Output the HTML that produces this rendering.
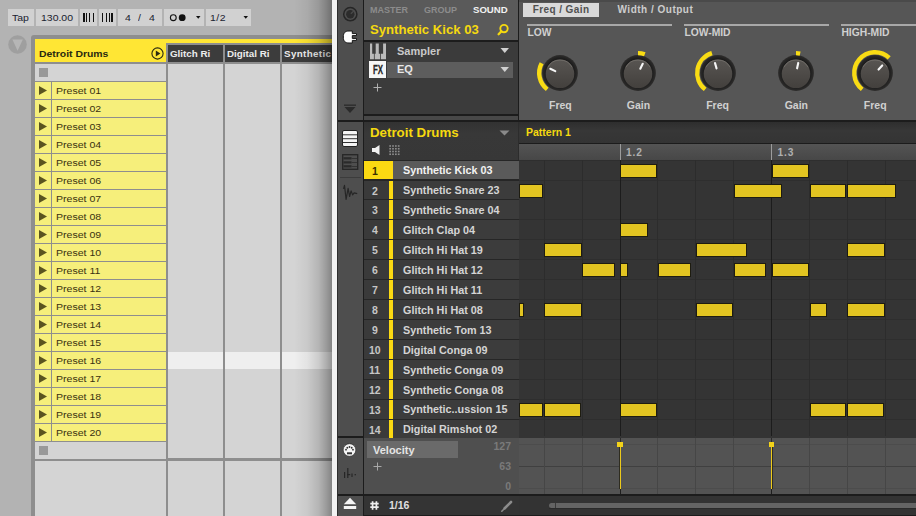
<!DOCTYPE html><html><head><meta charset="utf-8"><style>
html,body{margin:0;padding:0;width:916px;height:516px;overflow:hidden;background:#b3b3b3;}
body{position:relative;font-family:"Liberation Sans",sans-serif;}
div{position:absolute;box-sizing:border-box;}
.t{white-space:nowrap;}
svg{position:absolute;}
</style></head><body>
<div style="left:0px;top:0px;width:332px;height:516px;background:#b3b3b3;"></div>
<div style="left:8px;top:9px;width:26px;height:17px;background:#d1d1d1;"></div>
<div style="left:36px;top:9px;width:42px;height:17px;background:#d1d1d1;"></div>
<div style="left:80px;top:9px;width:17px;height:17px;background:#d1d1d1;"></div>
<div style="left:99px;top:9px;width:17px;height:17px;background:#d1d1d1;"></div>
<div style="left:118px;top:9px;width:44px;height:17px;background:#d1d1d1;"></div>
<div style="left:164px;top:9px;width:40px;height:17px;background:#d1d1d1;"></div>
<div style="left:206px;top:9px;width:45px;height:17px;background:#d1d1d1;"></div>
<div class="t" style="left:12px;top:12.9px;font-size:9.7px;line-height:9.7px;color:#1a2230;font-weight:normal;transform:scaleX(1.08);transform-origin:left;">Tap</div>
<div class="t" style="left:40.8px;top:12.9px;font-size:9.7px;line-height:9.7px;color:#1a2230;font-weight:normal;transform:scaleX(1.08);transform-origin:left;">130.00</div>
<div style="left:83px;top:13px;width:2px;height:9px;background:#111;"></div>
<div style="left:86px;top:13px;width:1.2px;height:9px;background:#111;"></div>
<div style="left:88.8px;top:13px;width:1.3px;height:9px;background:#111;"></div>
<div style="left:92.9px;top:13px;width:1.2px;height:9px;background:#111;"></div>
<div style="left:101.9px;top:13px;width:1.2px;height:9px;background:#111;"></div>
<div style="left:105.8px;top:13px;width:1.2px;height:9px;background:#111;"></div>
<div style="left:108.9px;top:13px;width:1.2px;height:9px;background:#111;"></div>
<div style="left:111.1px;top:13px;width:2.1px;height:9px;background:#111;"></div>
<div class="t" style="left:125px;top:12.9px;font-size:9.7px;line-height:9.7px;color:#1a2230;font-weight:normal;transform:scaleX(1.08);transform-origin:left;">4</div>
<div class="t" style="left:138.2px;top:12.9px;font-size:9.7px;line-height:9.7px;color:#1a2230;font-weight:normal;transform:scaleX(1.08);transform-origin:left;">/</div>
<div class="t" style="left:149px;top:12.9px;font-size:9.7px;line-height:9.7px;color:#1a2230;font-weight:normal;transform:scaleX(1.08);transform-origin:left;">4</div>
<svg style="left:164px;top:9px" width="40" height="17"><circle cx="9.3" cy="8.7" r="2.9" fill="none" stroke="#111" stroke-width="1.1"/><circle cx="18.2" cy="8.7" r="3.4" fill="#111"/><path d="M32 7 L36.5 7 L34.25 9.7 Z" fill="#111"/></svg>
<div class="t" style="left:210.3px;top:12.9px;font-size:9.7px;line-height:9.7px;color:#1a2230;font-weight:normal;letter-spacing:0.5px;transform:scaleX(1.08);transform-origin:left;">1/2</div>
<svg style="left:206px;top:9px" width="45" height="17"><path d="M37.5 7 L42 7 L39.75 9.7 Z" fill="#111"/></svg>
<svg style="left:7px;top:34px" width="21" height="21"><circle cx="10.5" cy="10.5" r="9.3" fill="#9f9f9f"/><path d="M5.4 5.6 L15.8 5.6 L10.6 16.8 Z" fill="#b6b6b6"/></svg>
<div style="left:31px;top:35px;width:320px;height:500px;background:#8e8e8e;border-radius:3px 0 0 0"></div>
<div style="left:35px;top:39px;width:300px;height:4px;background:#ffe634;"></div>
<div style="left:35px;top:39px;width:131px;height:23px;background:#ffe634;"></div>
<div style="left:168px;top:45px;width:55px;height:17px;background:#3c3c3c;"></div>
<div class="t" style="left:170px;top:48.7px;font-size:9.8px;line-height:9.8px;color:#ececec;font-weight:bold;">Glitch Ri</div>
<div style="left:225px;top:45px;width:55px;height:17px;background:#3c3c3c;"></div>
<div class="t" style="left:227px;top:48.7px;font-size:9.8px;line-height:9.8px;color:#ececec;font-weight:bold;">Digital Ri</div>
<div style="left:282px;top:45px;width:58px;height:17px;background:#3c3c3c;"></div>
<div class="t" style="left:284px;top:48.7px;font-size:9.8px;line-height:9.8px;color:#ececec;font-weight:bold;letter-spacing:0.35px">Synthetic</div>
<div class="t" style="left:38.5px;top:48.8px;font-size:9.6px;line-height:9.6px;color:#2a2a10;font-weight:bold;transform:scaleX(1.085);transform-origin:left;">Detroit Drums</div>
<svg style="left:150px;top:46px" width="15" height="15"><circle cx="7.5" cy="7.5" r="5.6" fill="none" stroke="#2a2a10" stroke-width="1.1"/><path d="M5.8 4.6 L10.4 7.5 L5.8 10.4 Z" fill="#2a2a10"/></svg>
<div style="left:35px;top:64px;width:131px;height:17px;background:#d4d4d4;"></div>
<div style="left:39px;top:68px;width:9px;height:9px;background:#999999;"></div>
<div style="left:35px;top:82px;width:16px;height:17px;background:#f6ef7b;"></div>
<div style="left:52px;top:82px;width:114px;height:17px;background:#f6ef7b;"></div>
<svg style="left:38px;top:86px" width="10" height="10"><path d="M1 0 L9 4.5 L1 9 Z" fill="#5a5420"/></svg>
<div class="t" style="left:55.5px;top:85.6px;font-size:9.6px;line-height:9.6px;color:#3a3210;font-weight:normal;transform:scaleX(1.1);transform-origin:left;">Preset 01</div>
<div style="left:35px;top:100px;width:16px;height:17px;background:#f6ef7b;"></div>
<div style="left:52px;top:100px;width:114px;height:17px;background:#f6ef7b;"></div>
<svg style="left:38px;top:104px" width="10" height="10"><path d="M1 0 L9 4.5 L1 9 Z" fill="#5a5420"/></svg>
<div class="t" style="left:55.5px;top:103.6px;font-size:9.6px;line-height:9.6px;color:#3a3210;font-weight:normal;transform:scaleX(1.1);transform-origin:left;">Preset 02</div>
<div style="left:35px;top:118px;width:16px;height:17px;background:#f6ef7b;"></div>
<div style="left:52px;top:118px;width:114px;height:17px;background:#f6ef7b;"></div>
<svg style="left:38px;top:122px" width="10" height="10"><path d="M1 0 L9 4.5 L1 9 Z" fill="#5a5420"/></svg>
<div class="t" style="left:55.5px;top:121.6px;font-size:9.6px;line-height:9.6px;color:#3a3210;font-weight:normal;transform:scaleX(1.1);transform-origin:left;">Preset 03</div>
<div style="left:35px;top:136px;width:16px;height:17px;background:#f6ef7b;"></div>
<div style="left:52px;top:136px;width:114px;height:17px;background:#f6ef7b;"></div>
<svg style="left:38px;top:140px" width="10" height="10"><path d="M1 0 L9 4.5 L1 9 Z" fill="#5a5420"/></svg>
<div class="t" style="left:55.5px;top:139.6px;font-size:9.6px;line-height:9.6px;color:#3a3210;font-weight:normal;transform:scaleX(1.1);transform-origin:left;">Preset 04</div>
<div style="left:35px;top:154px;width:16px;height:17px;background:#f6ef7b;"></div>
<div style="left:52px;top:154px;width:114px;height:17px;background:#f6ef7b;"></div>
<svg style="left:38px;top:158px" width="10" height="10"><path d="M1 0 L9 4.5 L1 9 Z" fill="#5a5420"/></svg>
<div class="t" style="left:55.5px;top:157.6px;font-size:9.6px;line-height:9.6px;color:#3a3210;font-weight:normal;transform:scaleX(1.1);transform-origin:left;">Preset 05</div>
<div style="left:35px;top:172px;width:16px;height:17px;background:#f6ef7b;"></div>
<div style="left:52px;top:172px;width:114px;height:17px;background:#f6ef7b;"></div>
<svg style="left:38px;top:176px" width="10" height="10"><path d="M1 0 L9 4.5 L1 9 Z" fill="#5a5420"/></svg>
<div class="t" style="left:55.5px;top:175.6px;font-size:9.6px;line-height:9.6px;color:#3a3210;font-weight:normal;transform:scaleX(1.1);transform-origin:left;">Preset 06</div>
<div style="left:35px;top:190px;width:16px;height:17px;background:#f6ef7b;"></div>
<div style="left:52px;top:190px;width:114px;height:17px;background:#f6ef7b;"></div>
<svg style="left:38px;top:194px" width="10" height="10"><path d="M1 0 L9 4.5 L1 9 Z" fill="#5a5420"/></svg>
<div class="t" style="left:55.5px;top:193.6px;font-size:9.6px;line-height:9.6px;color:#3a3210;font-weight:normal;transform:scaleX(1.1);transform-origin:left;">Preset 07</div>
<div style="left:35px;top:208px;width:16px;height:17px;background:#f6ef7b;"></div>
<div style="left:52px;top:208px;width:114px;height:17px;background:#f6ef7b;"></div>
<svg style="left:38px;top:212px" width="10" height="10"><path d="M1 0 L9 4.5 L1 9 Z" fill="#5a5420"/></svg>
<div class="t" style="left:55.5px;top:211.6px;font-size:9.6px;line-height:9.6px;color:#3a3210;font-weight:normal;transform:scaleX(1.1);transform-origin:left;">Preset 08</div>
<div style="left:35px;top:226px;width:16px;height:17px;background:#f6ef7b;"></div>
<div style="left:52px;top:226px;width:114px;height:17px;background:#f6ef7b;"></div>
<svg style="left:38px;top:230px" width="10" height="10"><path d="M1 0 L9 4.5 L1 9 Z" fill="#5a5420"/></svg>
<div class="t" style="left:55.5px;top:229.6px;font-size:9.6px;line-height:9.6px;color:#3a3210;font-weight:normal;transform:scaleX(1.1);transform-origin:left;">Preset 09</div>
<div style="left:35px;top:244px;width:16px;height:17px;background:#f6ef7b;"></div>
<div style="left:52px;top:244px;width:114px;height:17px;background:#f6ef7b;"></div>
<svg style="left:38px;top:248px" width="10" height="10"><path d="M1 0 L9 4.5 L1 9 Z" fill="#5a5420"/></svg>
<div class="t" style="left:55.5px;top:247.6px;font-size:9.6px;line-height:9.6px;color:#3a3210;font-weight:normal;transform:scaleX(1.1);transform-origin:left;">Preset 10</div>
<div style="left:35px;top:262px;width:16px;height:17px;background:#f6ef7b;"></div>
<div style="left:52px;top:262px;width:114px;height:17px;background:#f6ef7b;"></div>
<svg style="left:38px;top:266px" width="10" height="10"><path d="M1 0 L9 4.5 L1 9 Z" fill="#5a5420"/></svg>
<div class="t" style="left:55.5px;top:265.6px;font-size:9.6px;line-height:9.6px;color:#3a3210;font-weight:normal;transform:scaleX(1.1);transform-origin:left;">Preset 11</div>
<div style="left:35px;top:280px;width:16px;height:17px;background:#f6ef7b;"></div>
<div style="left:52px;top:280px;width:114px;height:17px;background:#f6ef7b;"></div>
<svg style="left:38px;top:284px" width="10" height="10"><path d="M1 0 L9 4.5 L1 9 Z" fill="#5a5420"/></svg>
<div class="t" style="left:55.5px;top:283.6px;font-size:9.6px;line-height:9.6px;color:#3a3210;font-weight:normal;transform:scaleX(1.1);transform-origin:left;">Preset 12</div>
<div style="left:35px;top:298px;width:16px;height:17px;background:#f6ef7b;"></div>
<div style="left:52px;top:298px;width:114px;height:17px;background:#f6ef7b;"></div>
<svg style="left:38px;top:302px" width="10" height="10"><path d="M1 0 L9 4.5 L1 9 Z" fill="#5a5420"/></svg>
<div class="t" style="left:55.5px;top:301.6px;font-size:9.6px;line-height:9.6px;color:#3a3210;font-weight:normal;transform:scaleX(1.1);transform-origin:left;">Preset 13</div>
<div style="left:35px;top:316px;width:16px;height:17px;background:#f6ef7b;"></div>
<div style="left:52px;top:316px;width:114px;height:17px;background:#f6ef7b;"></div>
<svg style="left:38px;top:320px" width="10" height="10"><path d="M1 0 L9 4.5 L1 9 Z" fill="#5a5420"/></svg>
<div class="t" style="left:55.5px;top:319.6px;font-size:9.6px;line-height:9.6px;color:#3a3210;font-weight:normal;transform:scaleX(1.1);transform-origin:left;">Preset 14</div>
<div style="left:35px;top:334px;width:16px;height:17px;background:#f6ef7b;"></div>
<div style="left:52px;top:334px;width:114px;height:17px;background:#f6ef7b;"></div>
<svg style="left:38px;top:338px" width="10" height="10"><path d="M1 0 L9 4.5 L1 9 Z" fill="#5a5420"/></svg>
<div class="t" style="left:55.5px;top:337.6px;font-size:9.6px;line-height:9.6px;color:#3a3210;font-weight:normal;transform:scaleX(1.1);transform-origin:left;">Preset 15</div>
<div style="left:35px;top:352px;width:16px;height:17px;background:#f6ef7b;"></div>
<div style="left:52px;top:352px;width:114px;height:17px;background:#f6ef7b;"></div>
<svg style="left:38px;top:356px" width="10" height="10"><path d="M1 0 L9 4.5 L1 9 Z" fill="#5a5420"/></svg>
<div class="t" style="left:55.5px;top:355.6px;font-size:9.6px;line-height:9.6px;color:#3a3210;font-weight:normal;transform:scaleX(1.1);transform-origin:left;">Preset 16</div>
<div style="left:35px;top:370px;width:16px;height:17px;background:#f6ef7b;"></div>
<div style="left:52px;top:370px;width:114px;height:17px;background:#f6ef7b;"></div>
<svg style="left:38px;top:374px" width="10" height="10"><path d="M1 0 L9 4.5 L1 9 Z" fill="#5a5420"/></svg>
<div class="t" style="left:55.5px;top:373.6px;font-size:9.6px;line-height:9.6px;color:#3a3210;font-weight:normal;transform:scaleX(1.1);transform-origin:left;">Preset 17</div>
<div style="left:35px;top:388px;width:16px;height:17px;background:#f6ef7b;"></div>
<div style="left:52px;top:388px;width:114px;height:17px;background:#f6ef7b;"></div>
<svg style="left:38px;top:392px" width="10" height="10"><path d="M1 0 L9 4.5 L1 9 Z" fill="#5a5420"/></svg>
<div class="t" style="left:55.5px;top:391.6px;font-size:9.6px;line-height:9.6px;color:#3a3210;font-weight:normal;transform:scaleX(1.1);transform-origin:left;">Preset 18</div>
<div style="left:35px;top:406px;width:16px;height:17px;background:#f6ef7b;"></div>
<div style="left:52px;top:406px;width:114px;height:17px;background:#f6ef7b;"></div>
<svg style="left:38px;top:410px" width="10" height="10"><path d="M1 0 L9 4.5 L1 9 Z" fill="#5a5420"/></svg>
<div class="t" style="left:55.5px;top:409.6px;font-size:9.6px;line-height:9.6px;color:#3a3210;font-weight:normal;transform:scaleX(1.1);transform-origin:left;">Preset 19</div>
<div style="left:35px;top:424px;width:16px;height:17px;background:#f6ef7b;"></div>
<div style="left:52px;top:424px;width:114px;height:17px;background:#f6ef7b;"></div>
<svg style="left:38px;top:428px" width="10" height="10"><path d="M1 0 L9 4.5 L1 9 Z" fill="#5a5420"/></svg>
<div class="t" style="left:55.5px;top:427.6px;font-size:9.6px;line-height:9.6px;color:#3a3210;font-weight:normal;transform:scaleX(1.1);transform-origin:left;">Preset 20</div>
<div style="left:35px;top:442px;width:131px;height:16.6px;background:#d4d4d4;"></div>
<div style="left:39px;top:446px;width:9px;height:9px;background:#999999;"></div>
<div style="left:35px;top:461px;width:131px;height:60px;background:#d4d4d4;"></div>
<div style="left:168px;top:64px;width:55px;height:394px;background:#d4d4d4;"></div>
<div style="left:168px;top:352px;width:55px;height:17px;background:#efefef;"></div>
<div style="left:168px;top:461px;width:55px;height:60px;background:#d4d4d4;"></div>
<div style="left:225px;top:64px;width:55px;height:394px;background:#d4d4d4;"></div>
<div style="left:225px;top:352px;width:55px;height:17px;background:#efefef;"></div>
<div style="left:225px;top:461px;width:55px;height:60px;background:#d4d4d4;"></div>
<div style="left:282px;top:64px;width:58px;height:394px;background:#d4d4d4;"></div>
<div style="left:282px;top:352px;width:58px;height:17px;background:#efefef;"></div>
<div style="left:282px;top:461px;width:58px;height:60px;background:#d4d4d4;"></div>
<div style="left:294px;top:0;width:38px;height:516px;background:linear-gradient(to right,rgba(0,0,0,0),rgba(0,0,0,0.05) 35%,rgba(0,0,0,0.15) 65%,rgba(0,0,0,0.27) 85%,rgba(0,0,0,0.38));"></div>
<div style="left:332px;top:0px;width:5px;height:516px;background:#f2f2f2;"></div>
<div style="left:337px;top:0px;width:579px;height:516px;background:#1c1c1c;"></div>
<div style="left:338px;top:0px;width:25px;height:120px;background:#4e4e4e;"></div>
<div style="left:338px;top:122px;width:25px;height:314px;background:#4e4e4e;"></div>
<div style="left:338px;top:438px;width:25px;height:56px;background:#4e4e4e;"></div>
<div style="left:338px;top:496px;width:25px;height:20px;background:#4e4e4e;"></div>
<div style="left:337px;top:0px;width:1px;height:516px;background:#2e2e2e;"></div>
<div style="left:364px;top:0px;width:154px;height:40px;background:#5a5a5a;"></div>
<div class="t" style="left:370px;top:6px;font-size:9px;line-height:9px;color:#8c8c8c;font-weight:bold;">MASTER</div>
<div class="t" style="left:424px;top:6px;font-size:9px;line-height:9px;color:#8c8c8c;font-weight:bold;">GROUP</div>
<div class="t" style="left:473px;top:5.2px;font-size:9.6px;line-height:9.6px;color:#f2f2f2;font-weight:bold;">SOUND</div>
<div class="t" style="left:370px;top:23px;font-size:13.15px;line-height:13.15px;color:#f5d90f;font-weight:bold;">Synthetic Kick 03</div>
<svg style="left:494px;top:22px" width="16" height="16"><circle cx="10" cy="6.6" r="3.7" fill="none" stroke="#f5d90f" stroke-width="1.9"/><path d="M7.4 9.3 L4.6 12.2" stroke="#f5d90f" stroke-width="2.3" stroke-linecap="round"/></svg>
<div style="left:364px;top:42px;width:154px;height:72px;background:#3b3b3b;"></div>
<div style="left:364px;top:116px;width:154px;height:4px;background:#484848;"></div>
<svg style="left:370px;top:43px" width="17" height="17"><path d="M0 0.5 H2.2 V10.8 H3.9 V16.2 H0 Z M5.7 0.5 H8.8 V10.8 H10.1 V16.2 H4.7 V10.8 H5.7 Z M13.1 0.5 H16 V16.2 H10.9 V10.8 H13.1 Z" fill="#bababa"/></svg>
<div style="left:369px;top:61px;width:17.2px;height:17px;background:#f6f6f6;"></div>
<div class="t" style="left:372.8px;top:63.9px;font-size:12.3px;line-height:12.3px;color:#262626;font-weight:bold;transform:scaleX(0.64);transform-origin:left;-webkit-text-stroke:0.3px #262626">FX</div>
<div class="t" style="left:397px;top:46px;font-size:11px;line-height:11px;color:#c9c9c9;font-weight:bold;">Sampler</div>
<div style="left:387px;top:62px;width:126px;height:16px;background:#5d5d5d;"></div>
<div class="t" style="left:397px;top:64px;font-size:11px;line-height:11px;color:#e8e8e8;font-weight:bold;">EQ</div>
<svg style="left:500px;top:47px" width="10" height="8"><path d="M0.5 1 L9 1 L4.75 6 Z" fill="#d0d0d0"/></svg>
<svg style="left:500px;top:66px" width="10" height="8"><path d="M0.5 1 L9 1 L4.75 6 Z" fill="#d0d0d0"/></svg>
<svg style="left:373px;top:83px" width="10" height="10"><path d="M4.5 0.5 L4.5 8.5 M0.5 4.5 L8.5 4.5" stroke="#b0b0b0" stroke-width="1"/></svg>
<svg style="left:342px;top:6px" width="17" height="17"><circle cx="8.3" cy="8.2" r="6.6" fill="none" stroke="#262626" stroke-width="1.5"/><circle cx="8.3" cy="8.2" r="4.2" fill="#2c2c2c"/><path d="M8.8 7.7 L11.8 4.9" stroke="#4a4a4a" stroke-width="1.3"/></svg>
<svg style="left:342px;top:29px" width="17" height="16"><path d="M1.3 8 C1.3 3.5 3.5 2 7 2 L10.3 2 L10.3 4.6 L14.5 4.6 L14.5 6.6 L10.3 6.6 L10.3 9.4 L14.5 9.4 L14.5 11.4 L10.3 11.4 L10.3 14 L7 14 C3.5 14 1.3 12.5 1.3 8 Z" fill="#ffffff" stroke="#151515" stroke-width="1"/></svg>
<svg style="left:343px;top:102px" width="14" height="13"><rect x="1" y="2.5" width="12" height="1.3" fill="#2a2a2a"/><path d="M1.5 5 L12.5 5 L7 11 Z" fill="#2a2a2a"/></svg>
<div style="left:519px;top:0px;width:397px;height:120px;background:#565656;"></div>
<div style="left:519px;top:0px;width:397px;height:2px;background:#4a4a4a;"></div>
<div style="left:523px;top:3px;width:76px;height:14px;background:#d9d9d9;"></div>
<div class="t" style="left:532.8px;top:5.3px;font-size:10px;line-height:10px;color:#505050;font-weight:bold;letter-spacing:0.4px">Freq / Gain</div>
<div class="t" style="left:617.5px;top:5.3px;font-size:10px;line-height:10px;color:#cdcdcd;font-weight:bold;letter-spacing:0.5px">Width / Output</div>
<div style="left:527px;top:24px;width:145px;height:2px;background:#a8a8a8;"></div>
<div class="t" style="left:527.4px;top:28.4px;font-size:10.3px;line-height:10.3px;color:#d0d0d0;font-weight:bold;">LOW</div>
<div style="left:684px;top:24px;width:145px;height:2px;background:#a8a8a8;"></div>
<div class="t" style="left:684.4px;top:28.4px;font-size:10.3px;line-height:10.3px;color:#d0d0d0;font-weight:bold;">LOW-MID</div>
<div style="left:841px;top:24px;width:149px;height:2px;background:#a8a8a8;"></div>
<div class="t" style="left:841.4px;top:28.4px;font-size:10.3px;line-height:10.3px;color:#d0d0d0;font-weight:bold;">HIGH-MID</div>
<svg style="left:534.4px;top:46.8px" width="52" height="52"><defs><radialGradient id="r560" cx="50%" cy="50%" r="50%"><stop offset="0.75" stop-color="#181818"/><stop offset="1" stop-color="#2e2d2c"/></radialGradient><linearGradient id="f560" x1="0" y1="0" x2="0" y2="1"><stop offset="0" stop-color="#585552"/><stop offset="1" stop-color="#43403d"/></linearGradient></defs><circle cx="26" cy="26" r="17.9" fill="url(#r560)"/><circle cx="26" cy="26.8" r="14.3" fill="url(#f560)"/><path d="M13.82 20.32 A13.8 13.8 0 0 1 38.18 20.32" fill="none" stroke="#7a7570" stroke-width="1" opacity="0.75"/><path d="M13.19 42.39 A20.8 20.8 0 0 1 7.63 16.23" fill="none" stroke="#f9dc14" stroke-width="4.4"/><path d="M21.24 24.18 L16.29 21.77" stroke="#f6f6f6" stroke-width="2.1" stroke-linecap="round"/></svg>
<div class="t" style="left:520.4px;top:100px;width:80px;text-align:center;font-size:10.5px;line-height:11px;color:#d0d0d0;font-weight:bold">Freq</div>
<svg style="left:612.4px;top:46.8px" width="52" height="52"><defs><radialGradient id="r638" cx="50%" cy="50%" r="50%"><stop offset="0.75" stop-color="#181818"/><stop offset="1" stop-color="#2e2d2c"/></radialGradient><linearGradient id="f638" x1="0" y1="0" x2="0" y2="1"><stop offset="0" stop-color="#585552"/><stop offset="1" stop-color="#43403d"/></linearGradient></defs><circle cx="26" cy="26" r="17.9" fill="url(#r638)"/><circle cx="26" cy="26.8" r="14.3" fill="url(#f638)"/><path d="M13.82 20.32 A13.8 13.8 0 0 1 38.18 20.32" fill="none" stroke="#7a7570" stroke-width="1" opacity="0.75"/><path d="M26.00 6.10 A19.9 19.9 0 0 1 32.81 7.30" fill="none" stroke="#f9dc14" stroke-width="4.4"/><path d="M28.32 21.74 L30.73 16.79" stroke="#f6f6f6" stroke-width="2.1" stroke-linecap="round"/></svg>
<div class="t" style="left:598.4px;top:100px;width:80px;text-align:center;font-size:10.5px;line-height:11px;color:#d0d0d0;font-weight:bold">Gain</div>
<svg style="left:691.6px;top:46.8px" width="52" height="52"><defs><radialGradient id="r717" cx="50%" cy="50%" r="50%"><stop offset="0.75" stop-color="#181818"/><stop offset="1" stop-color="#2e2d2c"/></radialGradient><linearGradient id="f717" x1="0" y1="0" x2="0" y2="1"><stop offset="0" stop-color="#585552"/><stop offset="1" stop-color="#43403d"/></linearGradient></defs><circle cx="26" cy="26" r="17.9" fill="url(#r717)"/><circle cx="26" cy="26.8" r="14.3" fill="url(#f717)"/><path d="M13.82 20.32 A13.8 13.8 0 0 1 38.18 20.32" fill="none" stroke="#7a7570" stroke-width="1" opacity="0.75"/><path d="M13.19 42.39 A20.8 20.8 0 0 1 19.92 6.11" fill="none" stroke="#f9dc14" stroke-width="4.4"/><path d="M24.54 21.41 L23.02 16.12" stroke="#f6f6f6" stroke-width="2.1" stroke-linecap="round"/></svg>
<div class="t" style="left:677.6px;top:100px;width:80px;text-align:center;font-size:10.5px;line-height:11px;color:#d0d0d0;font-weight:bold">Freq</div>
<svg style="left:770.3px;top:46.8px" width="52" height="52"><defs><radialGradient id="r796" cx="50%" cy="50%" r="50%"><stop offset="0.75" stop-color="#181818"/><stop offset="1" stop-color="#2e2d2c"/></radialGradient><linearGradient id="f796" x1="0" y1="0" x2="0" y2="1"><stop offset="0" stop-color="#585552"/><stop offset="1" stop-color="#43403d"/></linearGradient></defs><circle cx="26" cy="26" r="17.9" fill="url(#r796)"/><circle cx="26" cy="26.8" r="14.3" fill="url(#f796)"/><path d="M13.82 20.32 A13.8 13.8 0 0 1 38.18 20.32" fill="none" stroke="#7a7570" stroke-width="1" opacity="0.75"/><path d="M26.00 6.10 A19.9 19.9 0 0 1 30.14 6.53" fill="none" stroke="#f9dc14" stroke-width="4.4"/><path d="M27.10 21.32 L28.25 15.94" stroke="#f6f6f6" stroke-width="2.1" stroke-linecap="round"/></svg>
<div class="t" style="left:756.3px;top:100px;width:80px;text-align:center;font-size:10.5px;line-height:11px;color:#d0d0d0;font-weight:bold">Gain</div>
<svg style="left:849.2px;top:46.8px" width="52" height="52"><defs><radialGradient id="r875" cx="50%" cy="50%" r="50%"><stop offset="0.75" stop-color="#181818"/><stop offset="1" stop-color="#2e2d2c"/></radialGradient><linearGradient id="f875" x1="0" y1="0" x2="0" y2="1"><stop offset="0" stop-color="#585552"/><stop offset="1" stop-color="#43403d"/></linearGradient></defs><circle cx="26" cy="26" r="17.9" fill="url(#r875)"/><circle cx="26" cy="26.8" r="14.3" fill="url(#f875)"/><path d="M13.82 20.32 A13.8 13.8 0 0 1 38.18 20.32" fill="none" stroke="#7a7570" stroke-width="1" opacity="0.75"/><path d="M13.19 42.39 A20.8 20.8 0 1 1 40.19 10.79" fill="none" stroke="#f9dc14" stroke-width="4.4"/><path d="M29.55 22.56 L33.23 18.47" stroke="#f6f6f6" stroke-width="2.1" stroke-linecap="round"/></svg>
<div class="t" style="left:835.2px;top:100px;width:80px;text-align:center;font-size:10.5px;line-height:11px;color:#d0d0d0;font-weight:bold">Freq</div>
<div style="left:364px;top:122px;width:155px;height:38.6px;background:linear-gradient(#323232,#383838 30%,#373737)"></div>
<div style="left:518px;top:122px;width:1px;height:38.6px;background:#2c2c2c;"></div>
<div class="t" style="left:370px;top:125.5px;font-size:13.3px;line-height:13.3px;color:#f5d90f;font-weight:bold;">Detroit Drums</div>
<svg style="left:499px;top:130px" width="11" height="7"><path d="M0.5 0.5 L10.5 0.5 L5.5 5.5 Z" fill="#8a8a8a"/></svg>
<svg style="left:372px;top:145px" width="10" height="10"><path d="M0 3 L3 3 L7.5 0 L7.5 10 L3 7 L0 7 Z" fill="#f0f0f0"/></svg>
<svg style="left:389px;top:145px" width="12" height="11"><rect x="0.30" y="0.20" width="1.7" height="1.6" fill="#8c8c8c"/><rect x="0.30" y="2.95" width="1.7" height="1.6" fill="#8c8c8c"/><rect x="0.30" y="5.70" width="1.7" height="1.6" fill="#8c8c8c"/><rect x="0.30" y="8.45" width="1.7" height="1.6" fill="#8c8c8c"/><rect x="3.15" y="0.20" width="1.7" height="1.6" fill="#8c8c8c"/><rect x="3.15" y="2.95" width="1.7" height="1.6" fill="#8c8c8c"/><rect x="3.15" y="5.70" width="1.7" height="1.6" fill="#8c8c8c"/><rect x="3.15" y="8.45" width="1.7" height="1.6" fill="#8c8c8c"/><rect x="6.00" y="0.20" width="1.7" height="1.6" fill="#8c8c8c"/><rect x="6.00" y="2.95" width="1.7" height="1.6" fill="#8c8c8c"/><rect x="6.00" y="5.70" width="1.7" height="1.6" fill="#8c8c8c"/><rect x="6.00" y="8.45" width="1.7" height="1.6" fill="#8c8c8c"/><rect x="8.85" y="0.20" width="1.7" height="1.6" fill="#8c8c8c"/><rect x="8.85" y="2.95" width="1.7" height="1.6" fill="#8c8c8c"/><rect x="8.85" y="5.70" width="1.7" height="1.6" fill="#8c8c8c"/><rect x="8.85" y="8.45" width="1.7" height="1.6" fill="#8c8c8c"/></svg>
<svg style="left:342px;top:130px" width="16" height="17"><rect x="0.5" y="0.5" width="15" height="16" rx="1.5" fill="#f4f4f4" stroke="#222" stroke-width="1"/><rect x="1" y="4.3" width="14" height="1" fill="#333"/><rect x="1" y="8.2" width="14" height="1" fill="#333"/><rect x="1" y="12" width="14" height="1" fill="#333"/></svg>
<svg style="left:342px;top:153.5px" width="17" height="17"><rect x="0.7" y="0.7" width="15" height="14.6" fill="none" stroke="#262626" stroke-width="1.3"/><rect x="1.5" y="3.2" width="8" height="2.2" fill="#2a2a2a"/><rect x="1.5" y="7.3" width="8" height="2.2" fill="#2a2a2a"/><rect x="1.5" y="11.2" width="8" height="2.2" fill="#2a2a2a"/><rect x="9.5" y="4" width="5.5" height="0.9" fill="#303030"/><rect x="9.5" y="8" width="5.5" height="0.9" fill="#303030"/><rect x="9.5" y="12" width="5.5" height="0.9" fill="#303030"/></svg>
<div style="left:340px;top:177px;width:21px;height:1px;background:#3c3c3c;"></div>
<svg style="left:342px;top:184px" width="17" height="17"><path d="M1.5 4.9 L2.5 1.4 L4.1 15.5 L6.1 4.4 L7.6 12.5 L9.1 6.9 L10.6 10.9 L12.1 8.9 L15.2 9.6" fill="none" stroke="#262626" stroke-width="1.2" stroke-linejoin="round"/></svg>
<div style="left:519px;top:122px;width:397px;height:21.3px;background:linear-gradient(#2e2e2e,#373737 40%,#343434)"></div>
<div class="t" style="left:526px;top:127px;font-size:10.5px;line-height:10.5px;color:#f5d90f;font-weight:bold;">Pattern 1</div>
<div style="left:519px;top:144px;width:397px;height:16px;background:linear-gradient(#545454,#474747)"></div>
<div style="left:619.6px;top:144px;width:1.3px;height:16px;background:#9c9c9c;"></div>
<div style="left:771.1px;top:144px;width:1.3px;height:16px;background:#9c9c9c;"></div>
<div class="t" style="left:626px;top:147.5px;font-size:10.2px;line-height:10.2px;color:#b0b0b0;font-weight:bold;letter-spacing:0.9px">1.2</div>
<div class="t" style="left:777.5px;top:147.5px;font-size:10.2px;line-height:10.2px;color:#b0b0b0;font-weight:bold;letter-spacing:0.9px">1.3</div>
<div style="left:364px;top:160px;width:155px;height:278px;background:#262626;"></div>
<div style="left:519px;top:160px;width:397px;height:278px;background:#2e2e2e;"></div>
<div style="left:364px;top:160.6px;width:29px;height:18.83px;background:#fbd912;"></div>
<div style="left:393px;top:160.6px;width:125.5px;height:18.83px;background:#5a5a5a;"></div>
<div class="t" style="left:372px;top:165.6px;font-size:10.5px;line-height:10.5px;color:#3a2f00;font-weight:bold;">1</div>
<div class="t" style="left:403px;top:165.29999999999998px;font-size:10.8px;line-height:10.8px;color:#f2f2f2;font-weight:bold;">Synthetic Kick 03</div>
<div style="left:518.5px;top:160.6px;width:397.5px;height:19.03px;background:#343434;"></div>
<div style="left:364px;top:180.53px;width:25px;height:18.83px;background:#3a3a3a;"></div>
<div style="left:389px;top:180.53px;width:4px;height:18.83px;background:#fbd912;"></div>
<div style="left:393px;top:180.53px;width:125.5px;height:18.83px;background:#3c3c3c;"></div>
<div class="t" style="left:372px;top:185.53px;font-size:10.5px;line-height:10.5px;color:#c6c6c6;font-weight:bold;">2</div>
<div class="t" style="left:403px;top:185.23px;font-size:10.8px;line-height:10.8px;color:#d4d4d4;font-weight:bold;">Synthetic Snare 23</div>
<div style="left:518.5px;top:180.53px;width:397.5px;height:19.03px;background:#343434;"></div>
<div style="left:364px;top:200.45999999999998px;width:25px;height:18.83px;background:#3a3a3a;"></div>
<div style="left:389px;top:200.45999999999998px;width:4px;height:18.83px;background:#fbd912;"></div>
<div style="left:393px;top:200.45999999999998px;width:125.5px;height:18.83px;background:#3c3c3c;"></div>
<div class="t" style="left:372px;top:205.45999999999998px;font-size:10.5px;line-height:10.5px;color:#c6c6c6;font-weight:bold;">3</div>
<div class="t" style="left:403px;top:205.15999999999997px;font-size:10.8px;line-height:10.8px;color:#d4d4d4;font-weight:bold;">Synthetic Snare 04</div>
<div style="left:518.5px;top:200.45999999999998px;width:397.5px;height:19.03px;background:#343434;"></div>
<div style="left:364px;top:220.39px;width:25px;height:18.83px;background:#3a3a3a;"></div>
<div style="left:389px;top:220.39px;width:4px;height:18.83px;background:#fbd912;"></div>
<div style="left:393px;top:220.39px;width:125.5px;height:18.83px;background:#3c3c3c;"></div>
<div class="t" style="left:372px;top:225.39px;font-size:10.5px;line-height:10.5px;color:#c6c6c6;font-weight:bold;">4</div>
<div class="t" style="left:403px;top:225.08999999999997px;font-size:10.8px;line-height:10.8px;color:#d4d4d4;font-weight:bold;">Glitch Clap 04</div>
<div style="left:518.5px;top:220.39px;width:397.5px;height:19.03px;background:#343434;"></div>
<div style="left:364px;top:240.32px;width:25px;height:18.83px;background:#3a3a3a;"></div>
<div style="left:389px;top:240.32px;width:4px;height:18.83px;background:#fbd912;"></div>
<div style="left:393px;top:240.32px;width:125.5px;height:18.83px;background:#3c3c3c;"></div>
<div class="t" style="left:372px;top:245.32px;font-size:10.5px;line-height:10.5px;color:#c6c6c6;font-weight:bold;">5</div>
<div class="t" style="left:403px;top:245.01999999999998px;font-size:10.8px;line-height:10.8px;color:#d4d4d4;font-weight:bold;">Glitch Hi Hat 19</div>
<div style="left:518.5px;top:240.32px;width:397.5px;height:19.03px;background:#343434;"></div>
<div style="left:364px;top:260.25px;width:25px;height:18.83px;background:#3a3a3a;"></div>
<div style="left:389px;top:260.25px;width:4px;height:18.83px;background:#fbd912;"></div>
<div style="left:393px;top:260.25px;width:125.5px;height:18.83px;background:#3c3c3c;"></div>
<div class="t" style="left:372px;top:265.25px;font-size:10.5px;line-height:10.5px;color:#c6c6c6;font-weight:bold;">6</div>
<div class="t" style="left:403px;top:264.95px;font-size:10.8px;line-height:10.8px;color:#d4d4d4;font-weight:bold;">Glitch Hi Hat 12</div>
<div style="left:518.5px;top:260.25px;width:397.5px;height:19.03px;background:#343434;"></div>
<div style="left:364px;top:280.18px;width:25px;height:18.83px;background:#3a3a3a;"></div>
<div style="left:389px;top:280.18px;width:4px;height:18.83px;background:#fbd912;"></div>
<div style="left:393px;top:280.18px;width:125.5px;height:18.83px;background:#3c3c3c;"></div>
<div class="t" style="left:372px;top:285.18px;font-size:10.5px;line-height:10.5px;color:#c6c6c6;font-weight:bold;">7</div>
<div class="t" style="left:403px;top:284.88px;font-size:10.8px;line-height:10.8px;color:#d4d4d4;font-weight:bold;">Glitch Hi Hat 11</div>
<div style="left:518.5px;top:280.18px;width:397.5px;height:19.03px;background:#343434;"></div>
<div style="left:364px;top:300.11px;width:25px;height:18.83px;background:#3a3a3a;"></div>
<div style="left:389px;top:300.11px;width:4px;height:18.83px;background:#fbd912;"></div>
<div style="left:393px;top:300.11px;width:125.5px;height:18.83px;background:#3c3c3c;"></div>
<div class="t" style="left:372px;top:305.11px;font-size:10.5px;line-height:10.5px;color:#c6c6c6;font-weight:bold;">8</div>
<div class="t" style="left:403px;top:304.81px;font-size:10.8px;line-height:10.8px;color:#d4d4d4;font-weight:bold;">Glitch Hi Hat 08</div>
<div style="left:518.5px;top:300.11px;width:397.5px;height:19.03px;background:#343434;"></div>
<div style="left:364px;top:320.03999999999996px;width:25px;height:18.83px;background:#3a3a3a;"></div>
<div style="left:389px;top:320.03999999999996px;width:4px;height:18.83px;background:#fbd912;"></div>
<div style="left:393px;top:320.03999999999996px;width:125.5px;height:18.83px;background:#3c3c3c;"></div>
<div class="t" style="left:372px;top:325.03999999999996px;font-size:10.5px;line-height:10.5px;color:#c6c6c6;font-weight:bold;">9</div>
<div class="t" style="left:403px;top:324.73999999999995px;font-size:10.8px;line-height:10.8px;color:#d4d4d4;font-weight:bold;">Synthetic Tom 13</div>
<div style="left:518.5px;top:320.03999999999996px;width:397.5px;height:19.03px;background:#343434;"></div>
<div style="left:364px;top:339.97px;width:25px;height:18.83px;background:#3a3a3a;"></div>
<div style="left:389px;top:339.97px;width:4px;height:18.83px;background:#fbd912;"></div>
<div style="left:393px;top:339.97px;width:125.5px;height:18.83px;background:#3c3c3c;"></div>
<div class="t" style="left:369px;top:344.97px;font-size:10.5px;line-height:10.5px;color:#c6c6c6;font-weight:bold;">10</div>
<div class="t" style="left:403px;top:344.67px;font-size:10.8px;line-height:10.8px;color:#d4d4d4;font-weight:bold;">Digital Conga 09</div>
<div style="left:518.5px;top:339.97px;width:397.5px;height:19.03px;background:#343434;"></div>
<div style="left:364px;top:359.9px;width:25px;height:18.83px;background:#3a3a3a;"></div>
<div style="left:389px;top:359.9px;width:4px;height:18.83px;background:#fbd912;"></div>
<div style="left:393px;top:359.9px;width:125.5px;height:18.83px;background:#3c3c3c;"></div>
<div class="t" style="left:369px;top:364.9px;font-size:10.5px;line-height:10.5px;color:#c6c6c6;font-weight:bold;">11</div>
<div class="t" style="left:403px;top:364.59999999999997px;font-size:10.8px;line-height:10.8px;color:#d4d4d4;font-weight:bold;">Synthetic Conga 09</div>
<div style="left:518.5px;top:359.9px;width:397.5px;height:19.03px;background:#343434;"></div>
<div style="left:364px;top:379.83px;width:25px;height:18.83px;background:#3a3a3a;"></div>
<div style="left:389px;top:379.83px;width:4px;height:18.83px;background:#fbd912;"></div>
<div style="left:393px;top:379.83px;width:125.5px;height:18.83px;background:#3c3c3c;"></div>
<div class="t" style="left:369px;top:384.83px;font-size:10.5px;line-height:10.5px;color:#c6c6c6;font-weight:bold;">12</div>
<div class="t" style="left:403px;top:384.53px;font-size:10.8px;line-height:10.8px;color:#d4d4d4;font-weight:bold;">Synthetic Conga 08</div>
<div style="left:518.5px;top:379.83px;width:397.5px;height:19.03px;background:#343434;"></div>
<div style="left:364px;top:399.76px;width:25px;height:18.83px;background:#3a3a3a;"></div>
<div style="left:389px;top:399.76px;width:4px;height:18.83px;background:#fbd912;"></div>
<div style="left:393px;top:399.76px;width:125.5px;height:18.83px;background:#3c3c3c;"></div>
<div class="t" style="left:369px;top:404.76px;font-size:10.5px;line-height:10.5px;color:#c6c6c6;font-weight:bold;">13</div>
<div class="t" style="left:403px;top:404.46px;font-size:10.8px;line-height:10.8px;color:#d4d4d4;font-weight:bold;">Synthetic..ussion 15</div>
<div style="left:518.5px;top:399.76px;width:397.5px;height:19.03px;background:#343434;"></div>
<div style="left:364px;top:419.68999999999994px;width:25px;height:18.83px;background:#3a3a3a;"></div>
<div style="left:389px;top:419.68999999999994px;width:4px;height:18.83px;background:#fbd912;"></div>
<div style="left:393px;top:419.68999999999994px;width:125.5px;height:18.83px;background:#3c3c3c;"></div>
<div class="t" style="left:369px;top:424.68999999999994px;font-size:10.5px;line-height:10.5px;color:#c6c6c6;font-weight:bold;">14</div>
<div class="t" style="left:403px;top:424.38999999999993px;font-size:10.8px;line-height:10.8px;color:#d4d4d4;font-weight:bold;">Digital Rimshot 02</div>
<div style="left:518.5px;top:419.68999999999994px;width:397.5px;height:19.03px;background:#343434;"></div>
<div style="left:543.75px;top:160px;width:1px;height:276px;background:#2c2c2c;"></div>
<div style="left:581.625px;top:160px;width:1px;height:276px;background:#2c2c2c;"></div>
<div style="left:619.5px;top:160px;width:1px;height:276px;background:#1c1c1c;"></div>
<div style="left:657.375px;top:160px;width:1px;height:276px;background:#2c2c2c;"></div>
<div style="left:695.25px;top:160px;width:1px;height:276px;background:#2c2c2c;"></div>
<div style="left:733.125px;top:160px;width:1px;height:276px;background:#2c2c2c;"></div>
<div style="left:771.0px;top:160px;width:1px;height:276px;background:#1c1c1c;"></div>
<div style="left:808.875px;top:160px;width:1px;height:276px;background:#2c2c2c;"></div>
<div style="left:846.75px;top:160px;width:1px;height:276px;background:#2c2c2c;"></div>
<div style="left:884.625px;top:160px;width:1px;height:276px;background:#2c2c2c;"></div>
<div style="left:922.5px;top:160px;width:1px;height:276px;background:#1c1c1c;"></div>
<div style="left:620px;top:163.6px;width:37px;height:14px;background:#e2c421;border:1px solid #1e1c10"></div>
<div style="left:771.5px;top:163.6px;width:37.5px;height:14px;background:#e2c421;border:1px solid #1e1c10"></div>
<div style="left:519px;top:183.53px;width:24px;height:14px;background:#e2c421;border:1px solid #1e1c10"></div>
<div style="left:733.5px;top:183.53px;width:48.5px;height:14px;background:#e2c421;border:1px solid #1e1c10"></div>
<div style="left:809.5px;top:183.53px;width:36.5px;height:14px;background:#e2c421;border:1px solid #1e1c10"></div>
<div style="left:847.4px;top:183.53px;width:48.60000000000002px;height:14px;background:#e2c421;border:1px solid #1e1c10"></div>
<div style="left:620px;top:223.39px;width:28px;height:14px;background:#e2c421;border:1px solid #1e1c10"></div>
<div style="left:544.4px;top:243.32px;width:37.60000000000002px;height:14px;background:#e2c421;border:1px solid #1e1c10"></div>
<div style="left:695.5px;top:243.32px;width:51.0px;height:14px;background:#e2c421;border:1px solid #1e1c10"></div>
<div style="left:847.4px;top:243.32px;width:37.60000000000002px;height:14px;background:#e2c421;border:1px solid #1e1c10"></div>
<div style="left:582.3px;top:263.25px;width:32.700000000000045px;height:14px;background:#e2c421;border:1px solid #1e1c10"></div>
<div style="left:620px;top:263.25px;width:8px;height:14px;background:#e2c421;border:1px solid #1e1c10"></div>
<div style="left:658px;top:263.25px;width:32.5px;height:14px;background:#e2c421;border:1px solid #1e1c10"></div>
<div style="left:733.5px;top:263.25px;width:32.5px;height:14px;background:#e2c421;border:1px solid #1e1c10"></div>
<div style="left:771.5px;top:263.25px;width:37.0px;height:14px;background:#e2c421;border:1px solid #1e1c10"></div>
<div style="left:519px;top:303.11px;width:5px;height:14px;background:#e2c421;border:1px solid #1e1c10"></div>
<div style="left:544.4px;top:303.11px;width:37.60000000000002px;height:14px;background:#e2c421;border:1px solid #1e1c10"></div>
<div style="left:695.5px;top:303.11px;width:37.5px;height:14px;background:#e2c421;border:1px solid #1e1c10"></div>
<div style="left:809.5px;top:303.11px;width:17.5px;height:14px;background:#e2c421;border:1px solid #1e1c10"></div>
<div style="left:847.4px;top:303.11px;width:37.60000000000002px;height:14px;background:#e2c421;border:1px solid #1e1c10"></div>
<div style="left:519px;top:402.76px;width:24px;height:14px;background:#e2c421;border:1px solid #1e1c10"></div>
<div style="left:544.4px;top:402.76px;width:36.60000000000002px;height:14px;background:#e2c421;border:1px solid #1e1c10"></div>
<div style="left:620px;top:402.76px;width:37px;height:14px;background:#e2c421;border:1px solid #1e1c10"></div>
<div style="left:809.5px;top:402.76px;width:36.5px;height:14px;background:#e2c421;border:1px solid #1e1c10"></div>
<div style="left:847.4px;top:402.76px;width:36.60000000000002px;height:14px;background:#e2c421;border:1px solid #1e1c10"></div>
<div style="left:364px;top:438px;width:155px;height:56px;background:#4f4f4f;"></div>
<div style="left:367px;top:441px;width:91px;height:17px;background:#6a6a6a;"></div>
<div class="t" style="left:373px;top:445px;font-size:11px;line-height:11px;color:#e4e4e4;font-weight:bold;">Velocity</div>
<svg style="left:373px;top:462px" width="10" height="10"><path d="M4.5 0.5 L4.5 8.5 M0.5 4.5 L8.5 4.5" stroke="#a8a8a8" stroke-width="1"/></svg>
<div class="t" style="left:470px;top:441px;width:41px;text-align:right;font-size:10.5px;line-height:11px;color:#7a7a7a;font-weight:bold">127</div>
<div class="t" style="left:470px;top:461px;width:41px;text-align:right;font-size:10.5px;line-height:11px;color:#7a7a7a;font-weight:bold">63</div>
<div class="t" style="left:470px;top:481px;width:41px;text-align:right;font-size:10.5px;line-height:11px;color:#7a7a7a;font-weight:bold">0</div>
<div style="left:519px;top:438px;width:397px;height:56px;background:#535353;"></div>
<div style="left:519px;top:444px;width:397px;height:1px;background:#4c4c4c;"></div>
<div style="left:519px;top:466px;width:397px;height:1px;background:#404040;"></div>
<div style="left:519px;top:488px;width:397px;height:1px;background:#4c4c4c;"></div>
<div style="left:543.75px;top:438px;width:1px;height:56px;background:#464646;"></div>
<div style="left:581.625px;top:438px;width:1px;height:56px;background:#464646;"></div>
<div style="left:619.5px;top:438px;width:1px;height:56px;background:#2a2a2a;"></div>
<div style="left:657.375px;top:438px;width:1px;height:56px;background:#464646;"></div>
<div style="left:695.25px;top:438px;width:1px;height:56px;background:#464646;"></div>
<div style="left:733.125px;top:438px;width:1px;height:56px;background:#464646;"></div>
<div style="left:771.0px;top:438px;width:1px;height:56px;background:#2a2a2a;"></div>
<div style="left:808.875px;top:438px;width:1px;height:56px;background:#464646;"></div>
<div style="left:846.75px;top:438px;width:1px;height:56px;background:#464646;"></div>
<div style="left:884.625px;top:438px;width:1px;height:56px;background:#464646;"></div>
<div style="left:922.5px;top:438px;width:1px;height:56px;background:#2a2a2a;"></div>
<div style="left:619.0px;top:444px;width:2.4px;height:45px;background:#2e2c20;"></div>
<div style="left:619.5px;top:444px;width:1.4px;height:44.5px;background:#ecca1c;"></div>
<div style="left:619.6px;top:488.5px;width:1.4px;height:5.5px;background:#1e1e1e;"></div>
<div style="left:617.4000000000001px;top:441.5px;width:5.6px;height:5.6px;background:#f2d21a;"></div>
<div style="left:770.5px;top:444px;width:2.4px;height:45px;background:#2e2c20;"></div>
<div style="left:771.0px;top:444px;width:1.4px;height:44.5px;background:#ecca1c;"></div>
<div style="left:771.1px;top:488.5px;width:1.4px;height:5.5px;background:#1e1e1e;"></div>
<div style="left:768.9000000000001px;top:441.5px;width:5.6px;height:5.6px;background:#f2d21a;"></div>
<svg style="left:342px;top:443px" width="16" height="14"><circle cx="7.5" cy="7" r="6.3" fill="#f4f4f4" stroke="#222" stroke-width="0.6"/><circle cx="4.02" cy="6.67" r="0.9" fill="#333"/><circle cx="5.28" cy="4.76" r="0.9" fill="#333"/><circle cx="7.50" cy="4.00" r="0.9" fill="#333"/><circle cx="9.72" cy="4.76" r="0.9" fill="#333"/><circle cx="10.98" cy="6.67" r="0.9" fill="#333"/><rect x="5" y="9.3" width="5" height="2" fill="#333"/></svg>
<svg style="left:342px;top:467px" width="16" height="12"><rect x="2" y="5" width="1.2" height="6" fill="#262626"/><rect x="5.2" y="1" width="1.2" height="10" fill="#262626"/><rect x="5.2" y="7" width="3" height="1.2" fill="#262626"/><rect x="9.4" y="6.5" width="1.2" height="3.5" fill="#262626"/><rect x="12.6" y="7" width="1.3" height="1.3" fill="#262626"/></svg>
<div style="left:364px;top:496px;width:155px;height:19px;background:#343434;"></div>
<div style="left:519px;top:495.6px;width:397px;height:19.2px;background:#333333;"></div>
<svg style="left:370px;top:500.8px" width="10" height="9"><path d="M2.6 0.3 V8.7 M6.4 0.3 V8.7 M0.3 2.6 H8.7 M0.3 6.2 H8.7" stroke="#eeeeee" stroke-width="1.7"/></svg>
<div class="t" style="left:389px;top:500px;font-size:10.5px;line-height:10.5px;color:#e0e0e0;font-weight:bold;">1/16</div>
<svg style="left:343px;top:497px" width="15" height="13"><path d="M0.8 7.3 L7 0.8 L13.2 7.3 Z" fill="#f4f4f4"/><rect x="0.8" y="9" width="12.4" height="3" fill="#f4f4f4"/></svg>
<svg style="left:500px;top:500px" width="13" height="13"><path d="M4.5 8.5 L11 2" stroke="#8c8c8c" stroke-width="2.6" stroke-linecap="round"/><path d="M1.8 11.2 L3.3 9.7" stroke="#8c8c8c" stroke-width="1.6" stroke-linecap="round"/></svg>
<div style="left:549px;top:508.2px;width:380px;height:1px;background:#2a2a2a;"></div>
<div style="left:549px;top:502.6px;width:380px;height:5.6px;border-radius:2.8px;background:#646464"></div>
<div style="left:555px;top:502.6px;width:1px;height:5.6px;background:#3a3a3a;"></div>
</body></html>
